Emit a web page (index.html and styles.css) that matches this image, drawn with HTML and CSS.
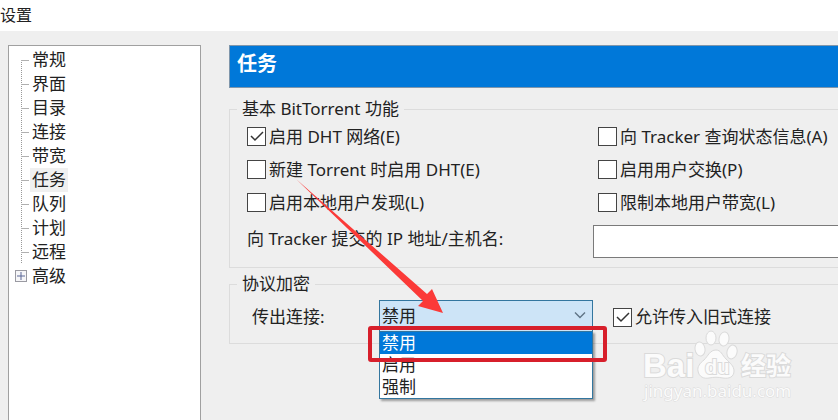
FILE: index.html
```html
<!DOCTYPE html>
<html lang="zh-CN">

	<head>
		<meta charset="utf-8">
		<title>设置</title>
		<link rel="stylesheet" href="styles.css">
	</head>

	<body>
		<div class="window">
			<div class="title">设置</div>
			<div class="panel">
				<nav class="side">
					<ul class="tree">
						<li><i class="branch first"></i><a href="#">常规</a></li>
						<li><i class="branch"></i><a href="#">界面</a></li>
						<li><i class="branch"></i><a href="#">目录</a></li>
						<li><i class="branch"></i><a href="#">连接</a></li>
						<li><i class="branch"></i><a href="#">带宽</a></li>
						<li><i class="branch"></i><a href="#" class="active">任务</a></li>
						<li><i class="branch"></i><a href="#">队列</a></li>
						<li><i class="branch"></i><a href="#">计划</a></li>
						<li><i class="branch"></i><a href="#">远程</a></li>
						<li class="parent">
							<button type="button" class="plus" aria-label="展开">
								<svg width="12" height="12" viewBox="0 0 12 12"><rect x="0.5" y="0.5" width="11" height="11" fill="#f6f6f8" stroke="#9a9aa2"/><path d="M2 6h8M6 2v8" stroke="#5b6796" fill="none"/></svg>
							</button>
							<a href="#">高级</a>
						</li>
					</ul>
				</nav>

				<form class="main">
					<h1 class="head">任务</h1>

					<fieldset>
						<legend>基本 BitTorrent 功能</legend>
						<div class="checks">
							<label><input type="checkbox" checked>启用 DHT 网络(E)</label>
							<label><input type="checkbox">向 Tracker 查询状态信息(A)</label>
							<label><input type="checkbox">新建 Torrent 时启用 DHT(E)</label>
							<label><input type="checkbox">启用用户交换(P)</label>
							<label><input type="checkbox">启用本地用户发现(L)</label>
							<label><input type="checkbox">限制本地用户带宽(L)</label>
						</div>
						<div class="host">
							<label for="ip">向 Tracker 提交的 IP 地址/主机名:</label>
							<input type="text" id="ip" value="">
						</div>
					</fieldset>

					<fieldset class="crypt">
						<legend>协议加密</legend>
						<div class="outgoing">
							<label for="mode">传出连接:</label>
							<div class="combo">
								<select id="mode">
									<option selected>禁用</option>
									<option>启用</option>
									<option>强制</option>
								</select>
								<svg class="chevron" width="12" height="8" viewBox="0 0 12 8"><path d="M1 1.5l5 5 5-5" fill="none" stroke="#5f7486" stroke-width="1.4"/></svg>
								<ul class="list">
									<li class="on">禁用</li>
									<li>启用</li>
									<li>强制</li>
								</ul>
								<div class="mark"></div>
								<svg class="arrow" width="150" height="136" viewBox="0 0 150 136"><path d="M0 0L131 115L136 110L147 134L122 127L127 122Z" fill="#fb3a38"/></svg>
							</div>
							<label class="legacy"><input type="checkbox" checked>允许传入旧式连接</label>
						</div>
					</fieldset>
				</form>
			</div>

			<svg class="logo" width="156" height="76" viewBox="0 0 156 76">
				<g fill="#fbfbfb" stroke="#dadada">
					<text class="logo-bai" x="3" y="49">Bai</text>
					<ellipse cx="60" cy="21" rx="5" ry="7" transform="rotate(-10 60 21)"/>
					<ellipse cx="71" cy="10" rx="5" ry="7"/>
					<ellipse cx="84" cy="11" rx="5" ry="7" transform="rotate(10 84 11)"/>
					<ellipse cx="92" cy="24" rx="5" ry="7" transform="rotate(15 92 24)"/>
					<path d="M76 22c-6 0-8 6-12 10-4 3-7 7-6 11 1 6 6 8 11 7 5-1 9-1 14 0 6 1 11-1 11-7 0-5-4-8-8-12-4-4-5-9-10-9z"/>
					<text class="logo-du" x="65" y="46">du</text>
					<text class="logo-cn" x="101" y="47">经验</text>
					<text class="logo-url" x="4" y="69">jingyan.baidu.com</text>
				</g>
			</svg>
		</div>
	</body>

</html>
```
FILE: styles.css
```css
* {
	margin: 0;
	padding: 0;
	box-sizing: border-box;
}

body,
input,
select,
button {
	font-family: "Noto Sans", "Noto Sans CJK SC", sans-serif;
	font-size: 17px;
	line-height: 24px;
	color: #222;
}

ul {
	list-style: none;
}

.window {
	position: relative;
	display: flex;
	flex-direction: column;
	min-height: 100vh;
	overflow: hidden;
	background: #efefef;
}

.title {
	height: 31px;
	padding-top: 3px;
	background: #fff;
	font-size: 16px;
}

.panel {
	flex: 1;
	display: flex;
	gap: 28px;
	padding: 14px 0 0 8px;
}

.side {
	flex: 0 0 193px;
	padding: 2px 0 0 12px;
	border: 1px solid #a0a0a0;
	border-bottom: 0;
	background: #fff;
}

.tree li {
	display: flex;
	align-items: center;
	height: 24px;
}

.tree a {
	padding: 0 2px;
	color: #222;
	text-decoration: none;
}

.tree .active {
	background: #f0f0f0;
}

.branch {
	width: 9px;
	height: 24px;
	background:
		linear-gradient(#b0b0b0, #b0b0b0) 0 12px / 8px 1px no-repeat,
		repeating-linear-gradient(#999 0 1px, #fff 1px 2px) 0 0 / 1px 24px no-repeat;
}

.branch.first {
	background:
		linear-gradient(#b0b0b0, #b0b0b0) 0 12px / 8px 1px no-repeat,
		repeating-linear-gradient(#999 0 1px, #fff 1px 2px) 0 12px / 1px 12px no-repeat;
}

.tree .parent {
	gap: 3px;
	margin-left: -6px;
}

.plus {
	display: flex;
	border: 0;
	background: none;
}

.main {
	flex: 1;
	min-width: 0;
}

.head {
	height: 43px;
	margin-bottom: 9px;
	padding: 5px 7px;
	border: 1px solid #7f96ab;
	border-right: 0;
	background: #0078d9;
	color: #fff;
	font-size: 20px;
	line-height: 26px;
}

fieldset {
	min-width: 0;
	padding: 0 0 9px 17px;
	border: 1px solid #dcdcdc;
	border-right: 0;
}

legend {
	margin-left: -10px;
	padding: 0 5px;
}

label {
	display: flex;
	align-items: center;
	white-space: nowrap;
}

input[type="checkbox"] {
	appearance: none;
	flex: none;
	width: 19px;
	height: 19px;
	margin-right: 3px;
	border: 1px solid #444;
	background: #fff;
}

input[type="checkbox"]:checked {
	background: #fff url("data:image/svg+xml,%3Csvg xmlns='http://www.w3.org/2000/svg' viewBox='0 0 17 17'%3E%3Cpath d='M3 8l4 4 8-8' fill='none' stroke='%23333' stroke-width='1.5'/%3E%3C/svg%3E") center / 17px no-repeat;
}

.checks {
	display: grid;
	grid-template-columns: 351px 1fr;
	grid-auto-rows: 33px;
	margin-top: -1px;
}

.host {
	display: grid;
	grid-template-columns: 346px 1fr;
	margin-top: 6px;
}

.host label {
	height: 28px;
}

.host input {
	width: 100%;
	height: 33px;
	padding: 0 6px;
	border: 1px solid #7a7a7a;
	border-right: 0;
	background: #fff;
}

.crypt {
	margin-top: 4px;
}

.outgoing {
	display: grid;
	grid-template-columns: 127px 214px 1fr;
	padding: 4px 0 0 5px;
}

.combo {
	position: relative;
}

.combo select {
	appearance: none;
	display: block;
	width: 100%;
	height: 32px;
	padding: 0 2px;
	border: 1px solid #33769f;
	border-radius: 0;
	background: #cde4f7;
}

.chevron {
	position: absolute;
	top: 11px;
	right: 7px;
}

.list {
	position: absolute;
	top: 31px;
	left: 0;
	right: 0;
	border: 1px solid #33769f;
	background: #fff;
	box-shadow: 2px 2px 2px rgba(0, 0, 0, .35);
}

.list li {
	height: 22px;
	padding: 0 2px;
	line-height: 22px;
}

.list .on {
	background: #0078d9;
	color: #fff;
}

/* red box round the chosen item */
.mark {
	position: absolute;
	top: 26px;
	left: -11px;
	right: -14px;
	height: 36px;
	border: 4px solid #d71f2b;
	border-radius: 3px;
}

.arrow {
	position: absolute;
	top: -121px;
	left: -83px;
	pointer-events: none;
}

.legacy {
	height: 34px;
	margin-left: 20px;
}

.logo {
	position: absolute;
	right: 42px;
	bottom: 16px;
}

.logo text {
	font-family: "Liberation Sans", "Noto Sans CJK SC", sans-serif;
	paint-order: stroke;
	stroke-width: 2px;
}

.logo .logo-bai {
	font-size: 33px;
	font-weight: bold;
}

.logo .logo-du {
	font-size: 20px;
	font-weight: bold;
}

.logo .logo-cn {
	font-size: 25px;
	font-weight: bold;
}

.logo .logo-url {
	font-family: "Noto Sans", sans-serif;
	font-size: 17px;
	stroke-width: 1px;
}
```
